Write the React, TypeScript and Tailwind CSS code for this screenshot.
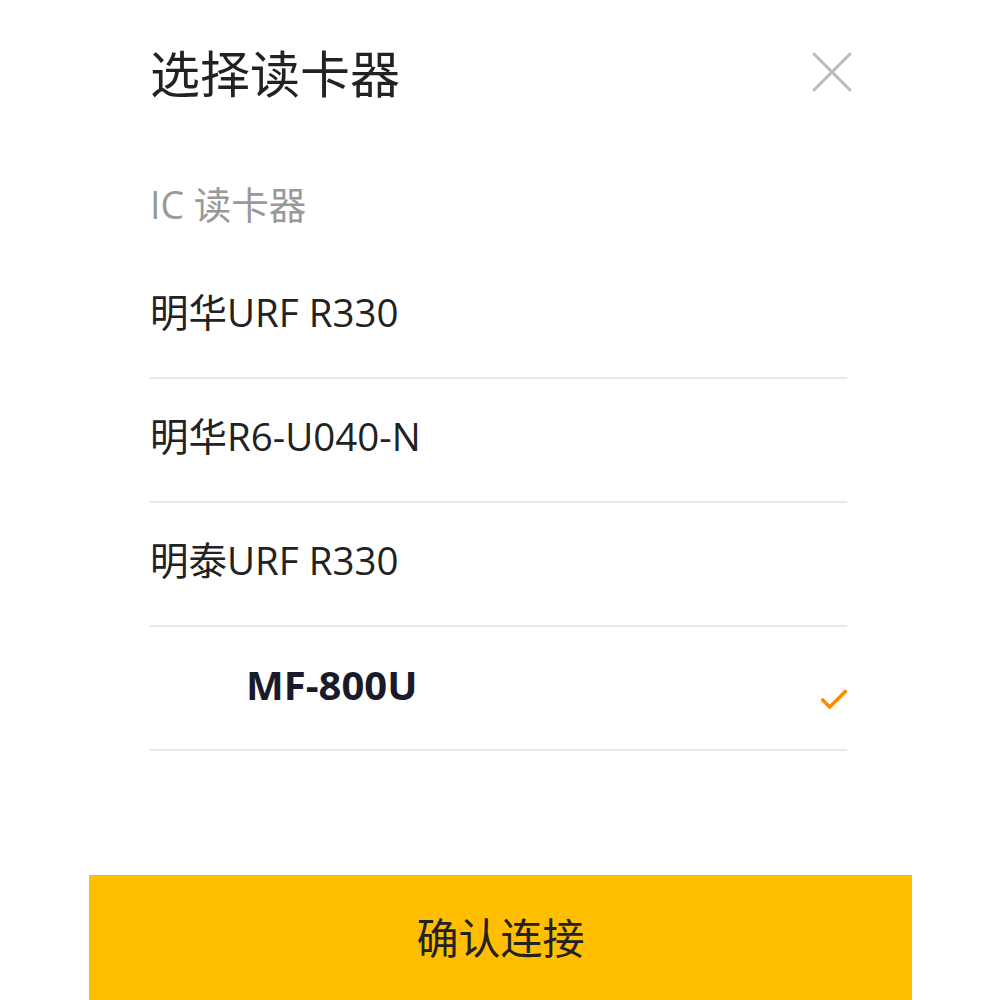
import { Check } from 'lucide-react';

const readers = ['明华URF R330', '明华R6-U040-N', '明泰URF R330'];

export default function App() {
  return (
    <div
      className="w-[1000px] h-[1000px] bg-white flex flex-col overflow-hidden text-[#222]"
      style={{ fontFamily: '"Open Sans", "Noto Sans CJK SC", sans-serif' }}
    >
      <div className="flex items-center justify-between pl-[150px] pr-[146px] pt-[34px] h-[114px]">
        <h1 className="text-[50px] leading-none font-normal">选择读卡器</h1>
        <svg width="44" height="44" viewBox="0 0 44 44" className="text-[#b8bcc2] mt-[-4px]">
          <path d="M4 4L40 40M40 4L4 40" stroke="currentColor" strokeWidth="3" strokeLinecap="round" />
        </svg>
      </div>

      <div className="px-[150px] pt-[72px] text-[37.5px] leading-none text-[#999]">IC 读卡器</div>

      <ul className="mx-[150px] mr-[153px] mt-[31px]">
        {readers.map(r => (
          <li key={r} className="h-[124px] flex items-center border-b-2 border-[#e8e8e8] text-[38.5px] pb-[6px]">
            {r}
          </li>
        ))}
        <li className="h-[124px] flex items-center justify-between border-b-2 border-[#e8e8e8] pl-[96px] pb-[6px]">
          <span className="text-[40px] font-bold text-[#1a1a2a]">MF-800U</span>
          <Check className="text-[#ff8a00] mr-[-4px] mt-[30px]" size={34} strokeWidth={2.5} />
        </li>
      </ul>

      <div className="flex-1" />
      <button className="mx-[89px] w-[823px] h-[125px] bg-[#ffbe00] text-[42px] text-[#222] flex items-center justify-center">
        确认连接
      </button>
    </div>
  );
}
